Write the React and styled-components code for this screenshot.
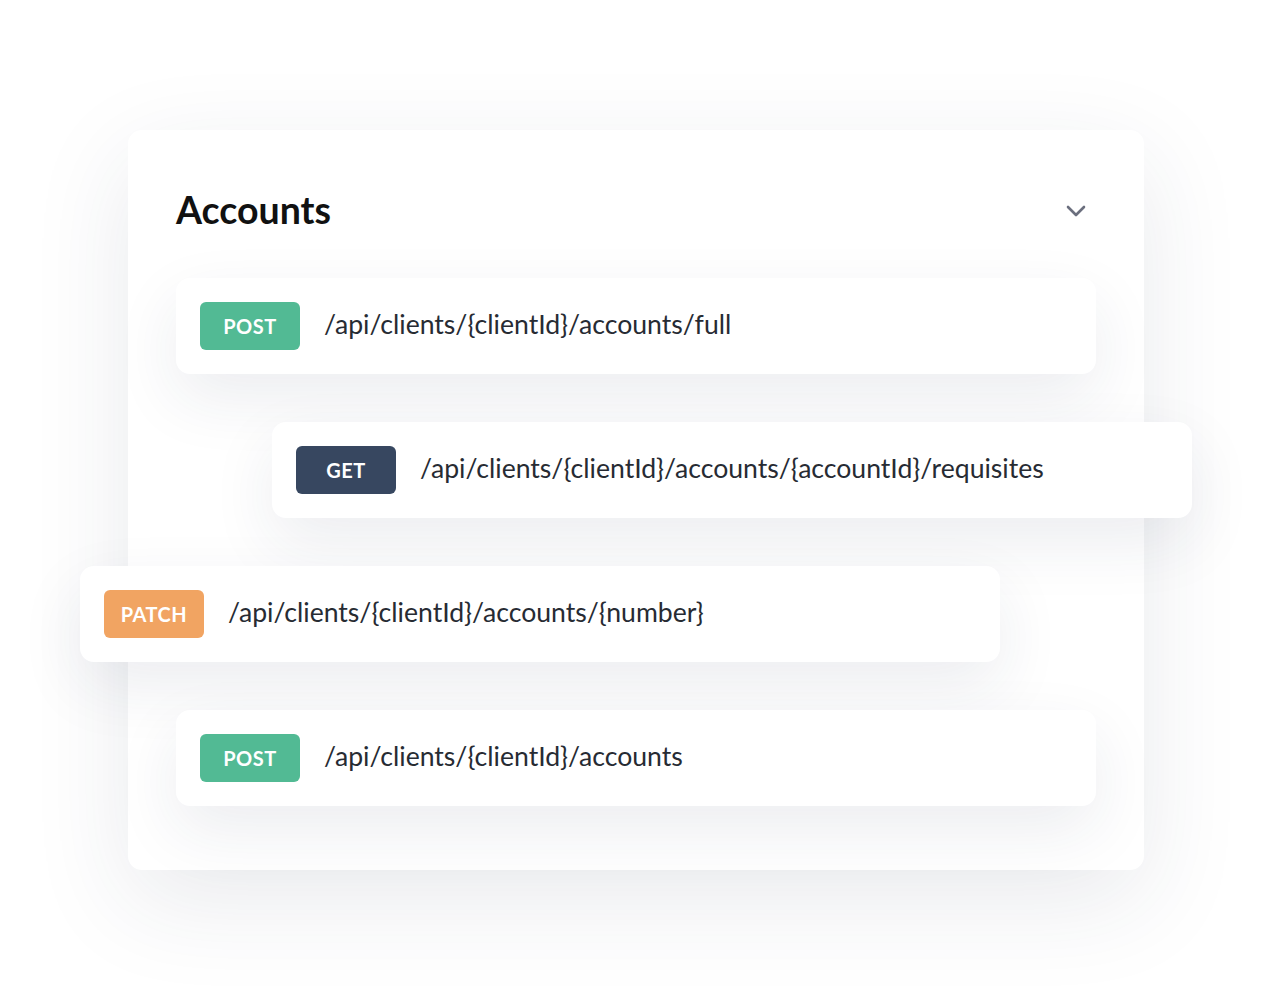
import React from 'react';
import styled, { createGlobalStyle } from 'styled-components';

const Global = createGlobalStyle`
    body {
        margin:0;
        background:#FFFFFF;
        font-family:Lato, "Noto Sans", sans-serif;
    }
`;

const Page = styled.div`
    position:relative;
    width:1272px;
    height:1000px;
    padding:130px 0 0 128px;
    box-sizing:border-box;
    overflow:hidden;
`;

const Card = styled.div`
    width:1016px;
    box-sizing:border-box;
    padding:48px 48px 64px 48px;
    background:#FFFFFF;
    border-radius:14px;
    box-shadow:0 30px 100px rgba(40, 50, 80, 0.10);
`;

const Header = styled.div`
    height:62px;
    margin-bottom:38px;
    display:flex;
    align-items:center;
    justify-content:space-between;
`;

const Title = styled.h2`
    margin:0;
    font-size:37.5px;
    font-weight:700;
    color:#111111;
`;

const Toggle = styled.div`
    width:24px;
    height:24px;
    margin:4px 8px 0 0;
    display:flex;
    align-items:center;
    justify-content:center;
`;

const List = styled.div`
    display:flex;
    flex-direction:column;
    gap:48px;
`;

const Row = styled.div`
    width:920px;
    height:96px;
    box-sizing:border-box;
    padding:0 24px;
    margin-left:${p => p.shift || 0}px;
    display:flex;
    align-items:center;
    gap:24px;
    background:#FFFFFF;
    border-radius:14px;
    box-shadow:0 24px 64px rgba(40, 50, 80, 0.085);
`;

const colors = {
    POST: '#52BA94',
    GET: '#374760',
    PATCH: '#F1A462'
};

const Badge = styled.span`
    width:100px;
    height:48px;
    flex-shrink:0;
    display:flex;
    align-items:center;
    justify-content:center;
    border-radius:6px;
    background:${p => colors[p.method]};
    color:#FFFFFF;
    font-size:20px;
    font-weight:700;
    letter-spacing:0.5px;
`;

const Path = styled.span`
    padding-bottom:4px;
    font-size:26.6px;
    color:#272B33;
`;

const endpoints = [
    { method: 'POST', path: '/api/clients/{clientId}/accounts/full', shift: 0 },
    { method: 'GET', path: '/api/clients/{clientId}/accounts/{accountId}/requisites', shift: 96 },
    { method: 'PATCH', path: '/api/clients/{clientId}/accounts/{number}', shift: -96 },
    { method: 'POST', path: '/api/clients/{clientId}/accounts', shift: 0 }
];

const App = () => {
    return <Page>
        <Global />
        <Card>
            <Header>
                <Title>Accounts</Title>
                <Toggle>
                    <svg width="20" height="12" viewBox="0 0 20 12" fill="none">
                        <path d="M2 2 L10 10 L18 2" stroke="#6B6F7E" strokeWidth="2.6" strokeLinecap="round" strokeLinejoin="round" />
                    </svg>
                </Toggle>
            </Header>
            <List>
                {endpoints.map((e, i) => <Row key={i} shift={e.shift}>
                    <Badge method={e.method}>{e.method}</Badge>
                    <Path>{e.path}</Path>
                </Row>)}
            </List>
        </Card>
    </Page>
}

export default App;
